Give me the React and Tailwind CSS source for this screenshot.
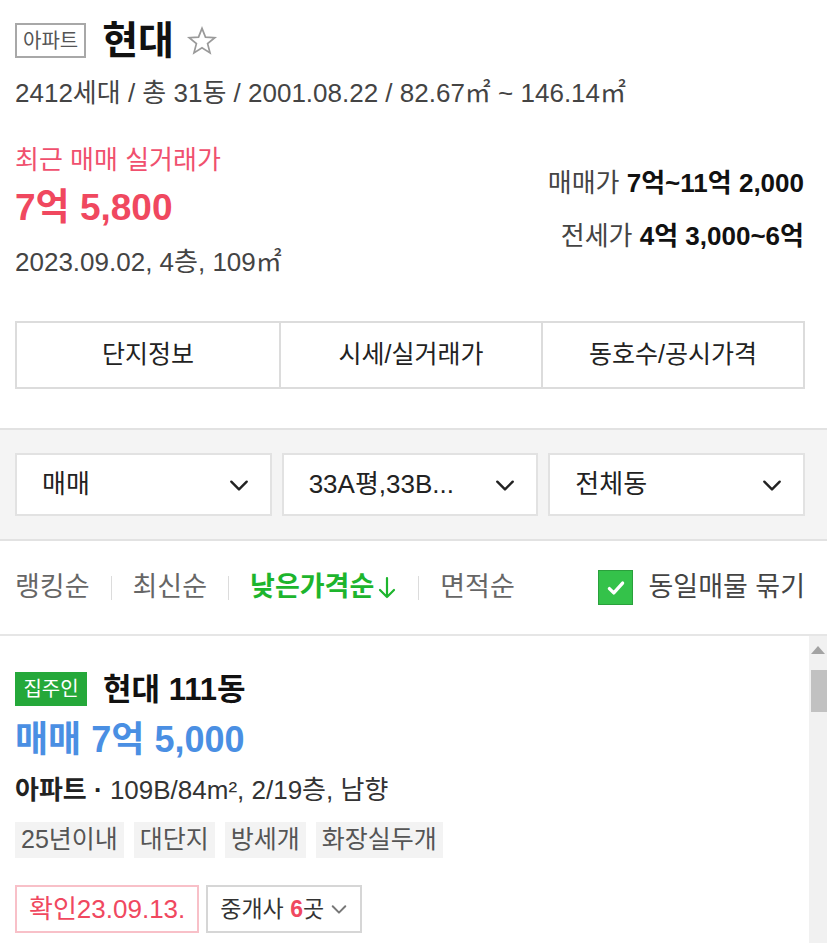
import React from 'react';

function Chevron({ className }) {
    return (
        <svg viewBox="0 0 20 20" className={className} fill="none" stroke="currentColor" strokeWidth="2.2" strokeLinecap="round" strokeLinejoin="round">
            <path d="M3 7l7 7 7-7" />
        </svg>
    );
}

function Dropdown({ label }) {
    return (
        <div className="flex items-center justify-between h-[63px] bg-white border-2 border-[#e2e2e2] pl-[25px] pr-[20px]">
            <span className="text-[26px] text-[#222]">{label}</span>
            <Chevron className="w-[22px] h-[22px] text-[#222]" />
        </div>
    );
}

function Sep() {
    return <span className="mx-[21px] h-[24px] w-px bg-[#dcdcdc]" />;
}

export default function App() {
    return (
        <div
            className="w-[827px] h-[943px] overflow-hidden bg-white text-[#222]"
            style={{ fontFamily: '"Liberation Sans", "Noto Sans CJK KR", sans-serif' }}
        >
            {/* header */}
            <div className="px-[15px] pt-[22px]">
                <div className="flex items-center h-[37px]">
                    <span className="flex items-center justify-center h-[35px] px-[6px] border-2 border-[#a8a8a8] text-[20px] text-[#555] leading-none">아파트</span>
                    <h1 className="ml-[16px] text-[39px] font-bold text-[#111] leading-none">현대</h1>
                    <svg viewBox="0 0 24 24" className="ml-[12px] w-[32px] h-[32px]" fill="none" stroke="#9a9a9a" strokeWidth="1.3" strokeLinejoin="miter">
                        <path d="M12 2.5l2.6 6.6 7 .4-5.4 4.5 1.8 6.9L12 17l-6 3.9 1.8-6.9-5.4-4.5 7-.4z" />
                    </svg>
                </div>
                <p className="mt-[17px] text-[26px] text-[#444] leading-[34px]">2412세대 / 총 31동 / 2001.08.22 / 82.67㎡ ~ 146.14㎡</p>

                <div className="flex justify-between mt-[33px]">
                    <div>
                        <p className="text-[26px] text-[#f0506e] leading-[34px]">최근 매매 실거래가</p>
                        <p className="mt-[9px] text-[37px] font-bold text-[#f0485f] leading-[44px]">7억 5,800</p>
                        <p className="mt-[15px] text-[26px] text-[#444] leading-[34px]">2023.09.02, 4층, 109㎡</p>
                    </div>
                    <div className="pt-[23px] text-right pr-[8px]">
                        <p className="text-[26px] text-[#444] leading-[34px]">매매가 <b className="text-[#111]">7억~11억 2,000</b></p>
                        <p className="mt-[19px] text-[26px] text-[#444] leading-[34px]">전세가 <b className="text-[#111]">4억 3,000~6억</b></p>
                    </div>
                </div>

                <div className="grid grid-cols-3 mt-[42px] mr-[7px] h-[68px] border-2 border-[#dcdcdc] text-[25px] text-[#222]">
                    <div className="flex items-center justify-center">단지정보</div>
                    <div className="flex items-center justify-center border-l-2 border-[#dcdcdc]">시세/실거래가</div>
                    <div className="flex items-center justify-center border-l-2 border-[#dcdcdc]">동호수/공시가격</div>
                </div>
            </div>

            {/* filters */}
            <div className="mt-[39px] bg-[#f4f4f4] border-y-2 border-[#e2e2e2] py-[23px] px-[15px] pr-[22px]">
                <div className="grid grid-cols-3 gap-[10px]">
                    <Dropdown label="매매" />
                    <Dropdown label="33A평,33B..." />
                    <Dropdown label="전체동" />
                </div>
            </div>

            {/* sort */}
            <div className="flex items-center justify-between h-[95px] px-[15px] pr-[22px] border-b-2 border-[#e6e6e6]">
                <div className="flex items-center text-[27px] text-[#666]">
                    <span>랭킹순</span>
                    <Sep />
                    <span>최신순</span>
                    <Sep />
                    <span className="flex items-center text-[#1db52d] font-semibold">
                        낮은가격순
                        <svg viewBox="0 0 20 24" className="ml-[3px] w-[20px] h-[24px]" fill="none" stroke="currentColor" strokeWidth="2.2" strokeLinecap="round" strokeLinejoin="round">
                            <path d="M10 2v19M3 14l7 7 7-7" />
                        </svg>
                    </span>
                    <Sep />
                    <span>면적순</span>
                </div>
                <div className="flex items-center">
                    <span className="flex items-center justify-center w-[35px] h-[35px] bg-[#34c24a] border border-[#2aa03c]">
                        <svg viewBox="0 0 20 20" className="w-[22px] h-[22px]" fill="none" stroke="white" strokeWidth="3" strokeLinecap="round" strokeLinejoin="round">
                            <path d="M4 10.5l4 4 8-9" />
                        </svg>
                    </span>
                    <span className="ml-[15px] text-[27px] text-[#444]">동일매물 묶기</span>
                </div>
            </div>

            {/* list */}
            <div className="flex h-[320px]">
                <div className="flex-1 px-[15px] pt-[36px]">
                    <div className="flex items-center h-[34px]">
                        <span className="flex items-center justify-center w-[72px] h-[34px] bg-[#25a83a] text-white text-[20px] leading-none">집주인</span>
                        <span className="ml-[16px] text-[31px] font-bold text-[#111] leading-none">현대 111동</span>
                    </div>
                    <p className="mt-[13px] text-[36px] font-bold text-[#4a8fe3] leading-[42px]">매매 7억 5,000</p>
                    <p className="mt-[12px] text-[26px] text-[#333] leading-[34px]"><b className="text-[#222]">아파트 ·</b> 109B/84m², 2/19층, 남향</p>
                    <div className="flex gap-[10px] mt-[15px]">
                        {['25년이내', '대단지', '방세개', '화장실두개'].map((t) => (
                            <span key={t} className="flex items-center h-[36px] px-[6px] bg-[#f3f3f3] text-[25px] text-[#555]">{t}</span>
                        ))}
                    </div>
                    <div className="flex gap-[7px] mt-[27px]">
                        <span className="flex items-center h-[48px] px-[12px] border-2 border-[#f8c0c8] text-[26px] text-[#f0485f]">확인23.09.13.</span>
                        <span className="flex items-center h-[48px] px-[12px] border-2 border-[#d6d6d6] text-[23px] text-[#333]">
                            중개사&nbsp;<b className="text-[#f0485f]">6</b>곳
                            <Chevron className="ml-[6px] w-[18px] h-[18px] text-[#777]" />
                        </span>
                    </div>
                </div>
                <div className="w-[18px] bg-[#f1f1f1] flex flex-col items-center">
                    <span className="mt-[10px] w-0 h-0 border-x-[7px] border-x-transparent border-b-[8px] border-b-[#a3a3a3]" />
                    <span className="mt-[16px] w-[16px] h-[42px] bg-[#c1c1c1] ml-[2px]" />
                </div>
            </div>
        </div>
    );
}
